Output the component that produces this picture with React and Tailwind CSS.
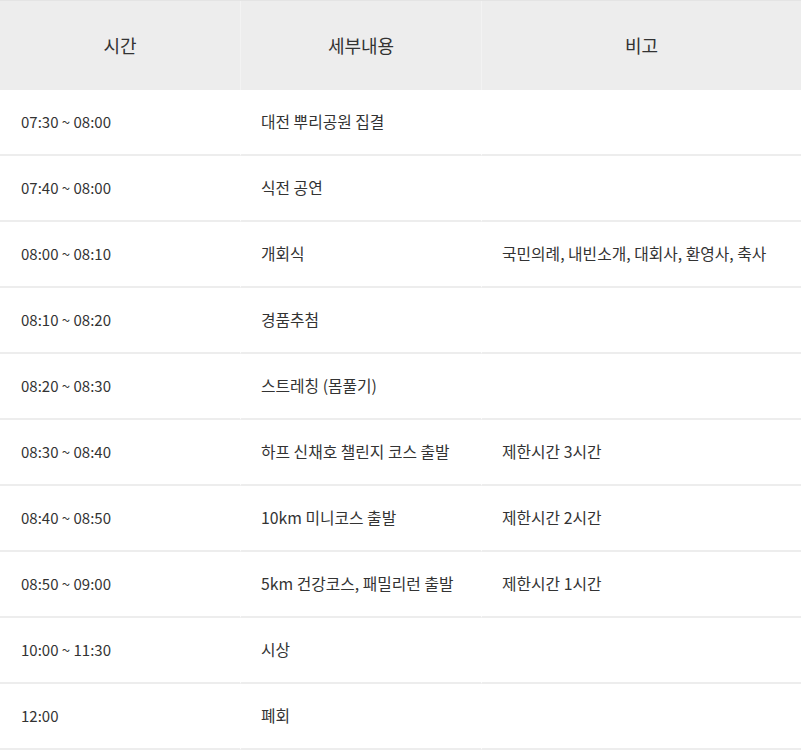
const rows = [
  ["07:30 ~ 08:00", "대전 뿌리공원 집결", ""],
  ["07:40 ~ 08:00", "식전 공연", ""],
  ["08:00 ~ 08:10", "개회식", "국민의례, 내빈소개, 대회사, 환영사, 축사"],
  ["08:10 ~ 08:20", "경품추첨", ""],
  ["08:20 ~ 08:30", "스트레칭 (몸풀기)", ""],
  ["08:30 ~ 08:40", "하프 신채호 챌린지 코스 출발", "제한시간 3시간"],
  ["08:40 ~ 08:50", "10km 미니코스 출발", "제한시간 2시간"],
  ["08:50 ~ 09:00", "5km 건강코스, 패밀리런 출발", "제한시간 1시간"],
  ["10:00 ~ 11:30", "시상", ""],
  ["12:00", "폐회", ""],
];

export default function App() {
  return (
    <div
      className="w-[801px] bg-white text-[#333]"
      style={{ fontFamily: '"Noto Sans CJK KR", "Noto Sans", sans-serif' }}
    >
      <div className="grid grid-cols-[240px_241px_320px] h-[90px] bg-[#ededed] border-t border-[#e4e4e4] text-[18px]">
        <div className="flex items-center justify-center">시간</div>
        <div className="flex items-center justify-center border-l border-[#f3f3f3]">세부내용</div>
        <div className="flex items-center justify-center border-l border-[#f3f3f3]">비고</div>
      </div>
      {rows.map((r, i) => (
        <div key={i} className="grid grid-cols-[240px_241px_320px] h-[66px]">
          <div className="flex items-center pl-[21px] border-b-2 border-[#ededed] text-[15px]">{r[0]}</div>
          <div className="flex items-center pl-[20px] border-b-2 border-[#ededed] border-l border-l-white text-[15.8px]">{r[1]}</div>
          <div className="flex items-center pl-[20px] border-b-2 border-[#ededed] border-l border-l-white text-[15.8px]">{r[2]}</div>
        </div>
      ))}
    </div>
  );
}
